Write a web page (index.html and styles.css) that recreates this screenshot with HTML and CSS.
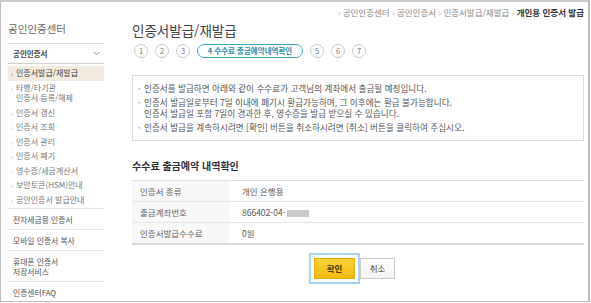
FILE: index.html
```html
<!DOCTYPE html>
<html lang="ko">
<head>
    <meta charset="UTF-8">
    <meta name="viewport" content="width=device-width, initial-scale=1.0">
    <title>공인인증센터 - 인증서발급/재발급</title>
    <link rel="stylesheet" href="styles.css">
</head>
<body>
    <div class="frame">
        <div class="sidebar">
            <div class="side-title">공인인증센터</div>
            <div class="side-group">
                <span>공인인증서</span>
                <svg class="chevron" width="7" height="5" viewBox="0 0 7 5"><path d="M0.5 0.8 L3.5 3.8 L6.5 0.8" fill="none" stroke="#888" stroke-width="1"/></svg>
            </div>
            <ul class="menu">
                <li class="active">인증서발급/재발급</li>
                <li>타행/타기관<br>인증서 등록/해제</li>
                <li>인증서 갱신</li>
                <li>인증서 조회</li>
                <li>인증서 관리</li>
                <li>인증서 폐기</li>
                <li>영수증/세금계산서</li>
                <li>보안토큰(HSM)안내</li>
                <li>공인인증서 발급안내</li>
            </ul>
            <ul class="sub-menu">
                <li>전자세금용 인증서</li>
                <li>모바일 인증서 복사</li>
                <li>휴대폰 인증서<br>저장서비스</li>
                <li>인증센터FAQ</li>
            </ul>
        </div>

        <div class="main-content">
            <div class="crumb">
                <span class="sep">›</span> 공인인증센터
                <span class="sep">›</span> 공인인증서
                <span class="sep">›</span> 인증서발급/재발급
                <span class="sep">›</span> <strong>개인용 인증서 발급</strong>
            </div>
            <h1>인증서발급/재발급</h1>
            <ol class="steps">
                <li>1</li>
                <li>2</li>
                <li>3</li>
                <li class="current">4 수수료 출금예약내역확인</li>
                <li>5</li>
                <li>6</li>
                <li>7</li>
            </ol>

            <div class="notice">
                <ul>
                    <li>인증서를 발급하면 아래와 같이 수수료가 고객님의 계좌에서 출금될 예정입니다.</li>
                    <li>인증서 발급일로부터 7일 이내에 폐기시 환급가능하며, 그 이후에는 환급 불가능합니다.<br>인증서 발급일 포함 7일이 경과한 후, 영수증을 발급 받으실 수 있습니다.</li>
                    <li>인증서 발급을 계속하시려면 [확인] 버튼을 취소하시려면 [취소] 버튼을 클릭하여 주십시오.</li>
                </ul>
            </div>

            <h2>수수료 출금예약 내역확인</h2>
            <table class="detail">
                <tr>
                    <th>인증서 종류</th>
                    <td>개인 은행용</td>
                </tr>
                <tr>
                    <th>출금계좌번호</th>
                    <td>866402-04-<span class="masked"></span></td>
                </tr>
                <tr>
                    <th>인증서발급수수료</th>
                    <td>0원</td>
                </tr>
            </table>

            <div class="buttons">
                <button class="btn-ok">확인</button>
                <button class="btn-cancel">취소</button>
            </div>
        </div>
    </div>
</body>
</html>
```

FILE: styles.css
```css
* {
    font-family: "Noto Sans CJK KR", "Noto Sans", sans-serif;
    padding: 0;
    margin: 0;
    box-sizing: border-box;
}
body {
    background-color: #FFFFFF;
}
ul, ol {
    list-style: none;
}
.frame {
    display: flex;
    width: 590px;
    height: 302px;
    border-top: 2px solid #C9C9C9;
    border-left: 1px solid #BDBDBD;
    border-right: 2px solid #BDBDBD;
    border-bottom: 1px solid #BDBDBD;
    overflow: hidden;
}

/* sidebar */
.sidebar {
    width: 104px;
    padding-left: 7px;
    padding-right: 1px;
    flex-shrink: 0;
}
.side-title {
    height: 42px;
    padding-top: 18px;
    font-size: 10.5px;
    line-height: 17px;
    color: #666;
    border-bottom: 1px solid #DDD;
}
.side-group {
    display: flex;
    justify-content: space-between;
    align-items: center;
    height: 20px;
    padding: 0 4px 0 5px;
    font-size: 7.5px;
    font-weight: 700;
    color: #444;
    border-bottom: 1px solid #CFCFCF;
}
.menu {
    padding: 2px 0 1px 0;
}
.menu li {
    padding: 2px 0 2px 8px;
    font-size: 8px;
    line-height: 10.5px;
    color: #777;
    text-indent: -5px;
}
.menu li::before {
    content: "›";
    display: inline-block;
    width: 5px;
    text-indent: 0;
    color: #BBB;
    font-size: 7px;
}
.menu li.active {
    background-color: #F2EBE0;
    color: #444;
}
.menu li.active::before {
    color: #777;
}
.sub-menu li {
    padding: 6px 0 4px 5px;
    font-size: 7.8px;
    line-height: 10px;
    color: #555;
    border-top: 1px solid #E6E6E6;
}

/* main */
.main-content {
    flex-grow: 1;
    padding: 5px 4px 0 27px;
}
.crumb {
    text-align: right;
    font-size: 8.5px;
    line-height: 10px;
    color: #888;
    white-space: nowrap;
}
.crumb .sep {
    color: #AAA;
}
.crumb strong {
    color: #333;
}
h1 {
    margin-top: 4px;
    font-size: 13.5px;
    line-height: 18px;
    font-weight: 400;
    color: #444;
}
.steps {
    display: flex;
    align-items: center;
    gap: 7px;
    margin-top: 5px;
    padding-left: 2px;
}
.steps li {
    width: 14px;
    height: 14px;
    border: 1px solid #CCC;
    border-radius: 50%;
    font-size: 7.5px;
    line-height: 12px;
    text-align: center;
    color: #777;
}
.steps li.current {
    width: 106px;
    border: 1px solid #45A8CC;
    border-radius: 7px;
    font-weight: 700;
    color: #2C8DB6;
}
.notice {
    margin-top: 17px;
    padding: 7px 5px 7px 5px;
    border: 1px solid #DDD;
}
.notice li {
    font-size: 8.6px;
    line-height: 11px;
    color: #555;
    padding-left: 6px;
    text-indent: -6px;
    margin-bottom: 3px;
}
.notice li:last-child {
    margin-bottom: 0;
}
.notice li::before {
    content: "·";
    display: inline-block;
    width: 6px;
    text-indent: 0;
    color: #D9A56A;
    font-weight: 700;
}
h2 {
    margin-top: 18px;
    font-size: 10px;
    line-height: 13px;
    font-weight: 700;
    color: #333;
}
.detail {
    width: 100%;
    margin-top: 8px;
    border-collapse: collapse;
    border-top: 1px solid #E0E0E0;
    border-bottom: 2px solid #DADADA;
}
.detail tr {
    border-bottom: 1px solid #E6E6E6;
}
.detail th, .detail td {
    height: 21px;
    font-size: 8.5px;
    font-weight: 400;
    text-align: left;
    vertical-align: middle;
}
.detail th {
    width: 98px;
    padding-left: 8px;
    background-color: #F8F8F8;
    color: #666;
}
.detail td {
    padding-left: 12px;
    color: #555;
}
.masked {
    display: inline-block;
    width: 22px;
    height: 7px;
    margin-left: 1px;
    vertical-align: -1px;
    background-color: #C9C9C9;
}
.buttons {
    display: flex;
    justify-content: center;
    gap: 5px;
    margin-top: 13px;
    padding-right: 7px;
}
.buttons button {
    height: 21px;
    font-size: 8.5px;
    cursor: pointer;
}
.btn-ok {
    width: 41px;
    font-weight: 700;
    color: #4A3A00;
    background: linear-gradient(#FAD43A, #F2BA0C);
    border: 1px solid #E4AE06;
    outline: 2px solid #A6D2F7;
    outline-offset: 3px;
}
.btn-cancel {
    width: 35px;
    color: #444;
    background: linear-gradient(#FFFFFF, #F3F3F3);
    border: 1px solid #CCC;
}
```
